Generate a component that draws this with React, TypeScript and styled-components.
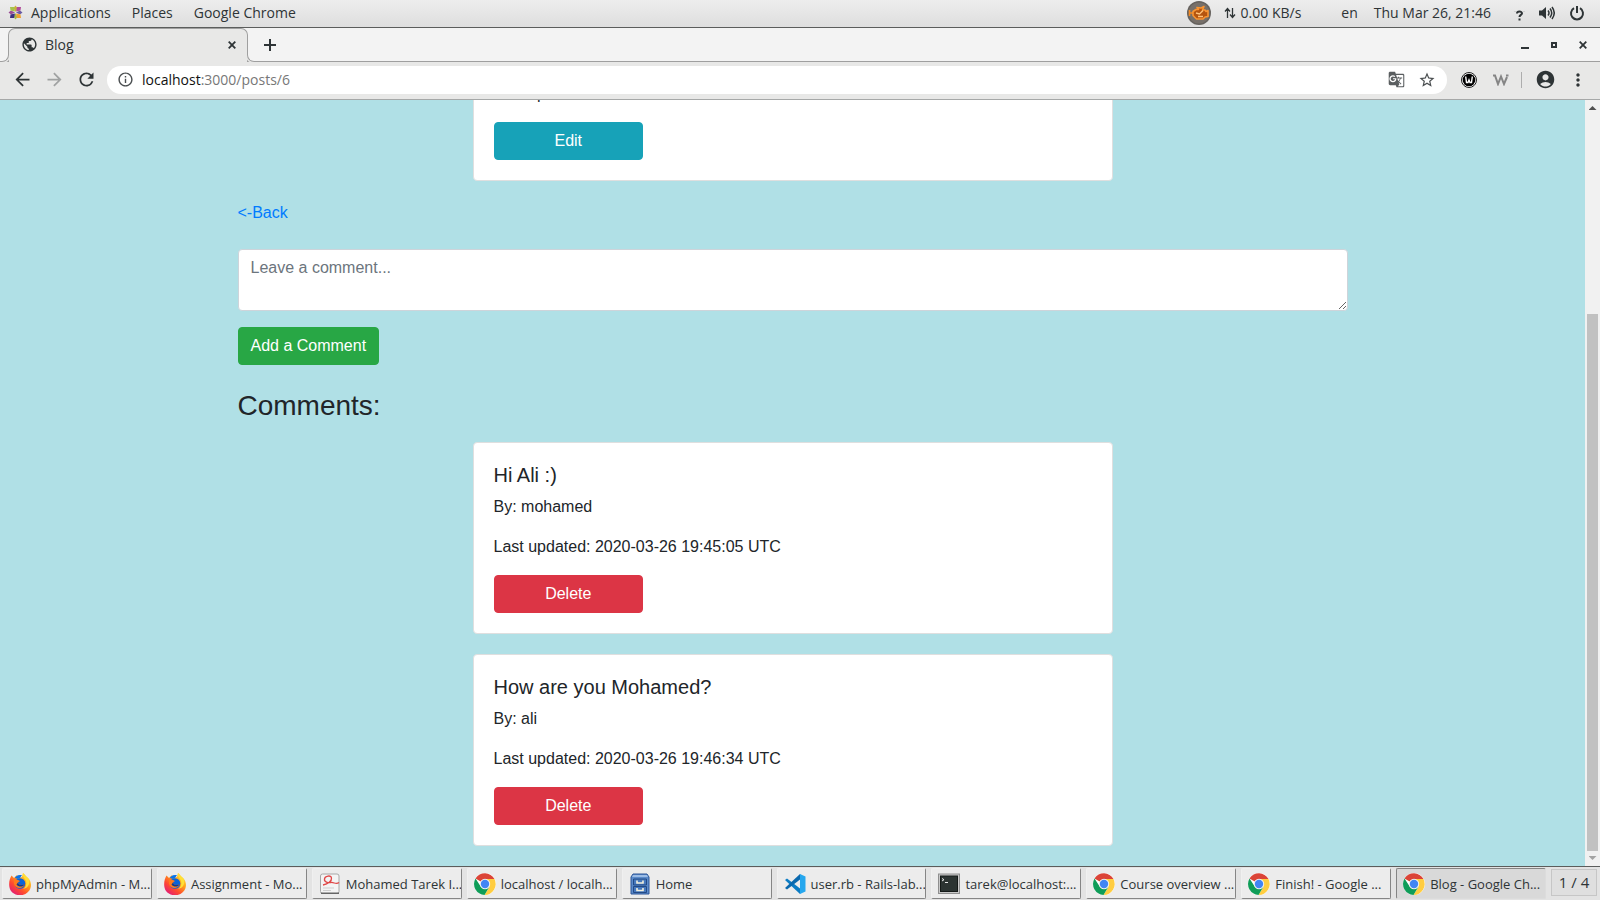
import React from "react";
import styled, { createGlobalStyle, css } from "styled-components";
import {
  MdAccountCircle,
  MdArrowBack,
  MdArrowForward,
  MdGTranslate,
  MdInfoOutline,
  MdMoreVert,
  MdPublic,
  MdRefresh,
  MdStarBorder,
} from "react-icons/md";

const ink = "#2e3436";
const chromeBg = "#e8e8e7";
const stripBg = "#f3f3f3";
const uiFont = `"Open Sans", "Noto Sans", sans-serif`;

const GlobalStyle = createGlobalStyle`
  *, *::before, *::after { box-sizing: border-box; }
  body {
    margin: 0;
    background: #b0e0e6;
    color: #212529;
    font-family: "Liberation Sans", Arial, sans-serif;
    font-size: 16px;
    line-height: 24px;
  }
  button, textarea, input { font: inherit; }
  svg { display: block; flex: none; }
`;

const Desktop = styled.div`
  height: 100vh;
  display: flex;
  flex-direction: column;
  overflow: hidden;
`;

/* ---------- top panel ---------- */

const TopPanel = styled.header`
  flex: none;
  height: 28px;
  display: flex;
  align-items: center;
  justify-content: space-between;
  padding: 0 15px 2px 8px;
  background: linear-gradient(#ededed, #dedede);
  border-bottom: 1px solid #5b5d5c;
  font-family: ${uiFont};
  font-size: 14px;
  line-height: 24px;
  color: ${ink};
`;

const PanelGroup = styled.div<{ $gap: number }>`
  display: flex;
  align-items: center;
  gap: ${(p) => p.$gap}px;
  white-space: nowrap;
`;

const PanelButton = styled.button`
  display: flex;
  align-items: center;
  gap: 8px;
  padding: 0;
  border: 0;
  background: none;
  color: inherit;
  line-height: 24px;
`;

/* ---------- browser chrome ---------- */

const TabStrip = styled.div`
  flex: none;
  height: 34px;
  display: flex;
  align-items: flex-end;
  justify-content: space-between;
  padding: 0 12px 0 8px;
  background: ${stripBg};
  border-bottom: 1px solid #9f9f9f;
`;

const Tabs = styled.div`
  display: flex;
  align-items: center;
  gap: 14px;
  align-self: stretch;
`;

const foot = css`
  content: "";
  position: absolute;
  bottom: 0;
  width: 8px;
  height: 8px;
  background: ${stripBg};
  border-bottom: 1px solid #9f9f9f;
`;

const Tab = styled.div`
  position: relative;
  width: 240px;
  height: 34px;
  margin-bottom: -1px;
  display: flex;
  align-items: center;
  padding: 0 10px 2px 12px;
  background: ${chromeBg};
  border: solid #9f9f9f;
  border-width: 1px 1px 0;
  border-radius: 7px 7px 0 0;
  font-family: ${uiFont};
  font-size: 14px;
  line-height: 20px;
  color: ${ink};

  &::before {
    ${foot}
    left: -8px;
    border-right: 1px solid #9f9f9f;
    border-bottom-right-radius: 7px;
    box-shadow: 1px 1px 0 ${chromeBg};
  }
  &::after {
    ${foot}
    right: -8px;
    border-left: 1px solid #9f9f9f;
    border-bottom-left-radius: 7px;
    box-shadow: -1px 1px 0 ${chromeBg};
  }
`;

const TabTitle = styled.span`
  flex: 1;
  margin-left: 7px;
`;

const IconButton = styled.button<{ $size?: number; $tone?: string }>`
  flex: none;
  width: ${(p) => p.$size ?? 16}px;
  height: ${(p) => p.$size ?? 16}px;
  display: grid;
  place-items: center;
  padding: 0;
  border: 0;
  background: none;
  color: ${(p) => p.$tone ?? ink};
`;

const WindowControls = styled.div`
  display: flex;
  align-items: center;
  gap: 13px;
  align-self: stretch;
  margin-right: -3px;
`;

const Toolbar = styled.div`
  flex: none;
  position: relative;
  height: 38px;
  display: flex;
  align-items: center;
  gap: 10px;
  padding: 0 12px 2px 11px;
  background: ${chromeBg};
  border-bottom: 1px solid #a6a8a8;
`;

const Omnibox = styled.div`
  flex: 1;
  height: 28px;
  display: flex;
  align-items: center;
  padding: 0 10px;
  border-radius: 14px;
  background: #fff;
  color: #4a4e50;
`;

const Address = styled.div`
  flex: 1;
  margin-left: 8px;
  font-family: ${uiFont};
  font-size: 14px;
  line-height: 20px;
  color: #777;
`;

const Host = styled.span`
  color: #111;
`;

const OmniActions = styled.div`
  display: flex;
  align-items: center;
  gap: 12px;
`;

const Extensions = styled.div`
  display: flex;
  align-items: center;
  gap: 12px;
`;

const Divider = styled.span`
  width: 1px;
  height: 16px;
  background: #adadad;
`;

/* ---------- page ---------- */

const Viewport = styled.div`
  flex: 1;
  min-height: 0;
  display: flex;
  background: #b0e0e6;
`;

const PageScroll = styled.main`
  flex: 1;
  min-width: 0;
  display: flex;
  flex-direction: column;
  justify-content: flex-end;
  overflow: hidden;
`;

const Container = styled.div`
  width: 100%;
  max-width: 1140px;
  margin: 0 auto;
  padding: 0 15px;
`;

const Card = styled.article`
  max-width: 640px;
  margin: 0 auto 20px;
  padding: 20px;
  border: 1px solid #dfdfdf;
  border-radius: 4px;
  background: #fff;
`;

const CardTitle = styled.h5`
  margin: 0 0 8px;
  font-size: 20px;
  line-height: 24px;
  font-weight: 400;
`;

const CardText = styled.p`
  margin: 0 0 16px;
`;

const tones = { info: "#17a2b8", danger: "#dc3545", success: "#28a745" };

const Button = styled.button<{ $tone: keyof typeof tones; $quarter?: boolean }>`
  display: block;
  width: ${(p) => (p.$quarter ? "25%" : "auto")};
  height: 38px;
  padding: 0 12px;
  border: 1px solid ${(p) => tones[p.$tone]};
  border-radius: 4px;
  background: ${(p) => tones[p.$tone]};
  color: #fff;
  line-height: 24px;
`;

const BackLink = styled.a`
  display: block;
  width: max-content;
  margin-bottom: 24px;
  color: #007bff;
  text-decoration: none;
`;

const CommentForm = styled.form`
  display: flex;
  flex-direction: column;
  align-items: flex-start;
  gap: 16px;
  margin-bottom: 24px;
`;

const CommentBox = styled.textarea`
  display: block;
  width: 100%;
  height: 62px;
  padding: 6px 12px;
  border: 1px solid #ced4da;
  border-radius: 4px;
  background: #fff;
  color: #495057;
  resize: vertical;
  &::placeholder {
    color: #6c757d;
    opacity: 1;
  }
`;

const Heading = styled.h3`
  margin: 0 0 19px;
  font-size: 28px;
  line-height: 34px;
  font-weight: 400;
`;

const ScrollTrack = styled.div`
  flex: none;
  width: 15px;
  display: flex;
  flex-direction: column;
  align-items: center;
  background: #f1f1f1;
`;

const ScrollArrow = styled.span<{ $down?: boolean }>`
  width: 8px;
  height: 4px;
  margin: ${(p) => (p.$down ? "5px 0 6px" : "6px 0 5px")};
  background: ${(p) => (p.$down ? "#a3a3a3" : "#505050")};
  clip-path: ${(p) =>
    p.$down ? "polygon(0 0, 100% 0, 50% 100%)" : "polygon(50% 0, 100% 100%, 0 100%)"};
`;

const ScrollLane = styled.div`
  flex: 1;
  display: flex;
  flex-direction: column;
  justify-content: flex-end;
`;

const ScrollThumb = styled.div`
  width: 11px;
  height: 73%;
  background: #c1c1c1;
`;

/* ---------- bottom panel ---------- */

const TaskBar = styled.footer`
  flex: none;
  height: 34px;
  display: flex;
  gap: 5px;
  padding: 1px 3px 1px 2px;
  background: #e3e3e3;
  border-top: 1px solid #5b5d5c;
  font-family: ${uiFont};
  font-size: 13px;
  color: ${ink};
`;

const TaskButton = styled.button<{ $active?: boolean }>`
  flex: 1;
  min-width: 0;
  display: flex;
  align-items: center;
  gap: 5px;
  padding: 0 0 0 6px;
  overflow: hidden;
  white-space: nowrap;
  color: inherit;
  border: solid;
  border-width: 1px;
  border-color: ${(p) =>
    p.$active ? "#858585 #dcdcdc #dcdcdc #858585" : "#f0f0f0 #858585 #858585 #f0f0f0"};
  border-radius: 2px;
  background: ${(p) => (p.$active ? "#d9d9d9" : "#ececec")};
`;

const Pager = styled.button`
  flex: none;
  width: 46px;
  margin: 1px 0 3px;
  padding: 0 0 2px;
  border: 1px solid #c6c6c6;
  background: #dfdfdf;
  color: inherit;
  font-size: 15px;
`;

/* ---------- drawings ---------- */

const CentosLogo = () => (
  <svg width="15" height="15" viewBox="0 0 30 30">
    <path d="M15 1 19 6 15 14 11 6Z" fill="#c9b23a" />
    <path d="M15 29 19 24 15 16 11 24Z" fill="#a4b64d" />
    <path d="M1 15 6 11 14 15 6 19Z" fill="#9b4d96" />
    <path d="M29 15 24 11 16 15 24 19Z" fill="#6a5ca3" />
    <path d="M4 4h8l2 9-9-2z" fill="#a6c34c" />
    <path d="M26 4h-8l-2 9 9-2z" fill="#b04c9a" />
    <path d="M4 26h8l2-9-9 2z" fill="#3c2f80" />
    <path d="M26 26h-8l-2-9 9 2z" fill="#efa032" />
  </svg>
);

const EngineIcon = () => (
  <svg width="24" height="24" viewBox="0 0 24 24">
    <circle cx="12" cy="12" r="12" fill="#66625e" />
    <circle cx="12" cy="12" r="10.500" fill="#77706a" />
    <path d="M2.500 9v6M3 12h3" fill="none" stroke="#f58a23" strokeWidth="1.600" />
    <path
      d="M6 10.500 9 8.500h2.500L10 6.500l4 .5 3-1.500L15.500 9H18l1 1.500 2-1v6l-3 .5-2 2H9.500L6 14.500Z"
      fill="#b4540f"
      stroke="#f99432"
      strokeWidth="1.600"
      strokeLinejoin="round"
    />
    <path d="m9 12 3.500 1L16 9.500M11 15.500h5" fill="none" stroke="#ffc27a" strokeWidth="1.400" />
  </svg>
);

const SpeedIcon = () => (
  <svg width="12" height="12" viewBox="0 0 12 12" fill="none" stroke={ink} strokeWidth="1.300">
    <path d="M3.500 11V2M1 4.500 3.500 1.500 6 4.500M8.500 1v9M6 7.500l2.500 3 2.500-3" />
  </svg>
);

const HelpIcon = () => (
  <svg width="11" height="16" viewBox="0 0 11 16" fill="none" stroke={ink} strokeWidth="2">
    <path d="M3 8.500C3 6 8 6 8 8.300 8 10 5.500 9.700 5.500 12M5.500 13.500v2" />
    <path d="M.5 6.500h1M9.500 6.500h1" stroke="#bbb" strokeWidth="1" />
  </svg>
);

const SpeakerIcon = () => (
  <svg width="16" height="14" viewBox="0 0 16 14">
    <path d="M0 4.500h3L7 1v12L3 9.500H0z" fill={ink} />
    <path
      d="M9 4.500q2 2.500 0 5M11 2.500q3.500 4.500 0 9M13 1q4.500 6 0 12"
      fill="none"
      stroke={ink}
      strokeWidth="1.500"
    />
  </svg>
);

const PowerIcon = () => (
  <svg width="16" height="16" viewBox="0 0 16 16" fill="none" stroke={ink} strokeWidth="2">
    <path d="M5 3.200a6 6 0 1 0 6 0M8 1v7" />
  </svg>
);

const CrossIcon = ({ size = 8 }: { size?: number }) => (
  <svg width={size} height={size} viewBox="0 0 8 8" stroke={ink} strokeWidth="1.800">
    <path d="m.7.7 6.600 6.600M7.300.7.7 7.300" />
  </svg>
);

const PlusIcon = () => (
  <svg width="12" height="12" viewBox="0 0 12 12" stroke={ink} strokeWidth="2">
    <path d="M6 0v12M0 6h12" />
  </svg>
);

const MinimizeIcon = () => (
  <svg width="8" height="8" viewBox="0 0 8 8">
    <path d="M0 6h8v2H0z" fill={ink} />
  </svg>
);

const MaximizeIcon = () => (
  <svg width="6" height="6" viewBox="0 0 6 6">
    <path d="M1 1h4v4H1z" fill="none" stroke={ink} strokeWidth="2" />
  </svg>
);

const WapIcon = () => (
  <svg width="16" height="16" viewBox="0 0 16 16">
    <circle cx="8" cy="8" r="7.500" fill="#fff" stroke="#222" />
    <circle cx="8" cy="8" r="6.300" fill="#000" />
    <path
      d="M4.700 4.500 5.500 10.500H7L8 8l1 2.500h1.500l.8-6"
      fill="none"
      stroke="#fff"
      strokeWidth="1.400"
    />
  </svg>
);

const WaveIcon = () => (
  <svg width="16" height="12" viewBox="0 0 16 12" fill="none" stroke="#858585" strokeWidth="2">
    <path d="M0 1.500h2L5 10l3-7.500L11 10l3-7" />
    <path d="M13 1.500h2.500" />
  </svg>
);

const FirefoxIcon = () => (
  <svg width="22" height="22" viewBox="0 0 22 22">
    <defs>
      <linearGradient id="fox" x1="1" y1="0" x2="0.200" y2="1">
        <stop offset="0" stopColor="#fff44f" />
        <stop offset="0.400" stopColor="#ffa31a" />
        <stop offset="0.700" stopColor="#ff4a2f" />
        <stop offset="1" stopColor="#e0197d" />
      </linearGradient>
    </defs>
    <path
      d="M2.500 2.500 5 5l3-3 1 3 4-1 1-4c3 2 3 4 5 5 4 4 4 10 0 14-5 5-13 4-17-1C-1 13 0 7 2.500 2.500Z"
      fill="url(#fox)"
    />
    <circle cx="11" cy="10.500" r="5.300" fill="#0a63d8" />
    <path d="M11 2c-3 0-5 2-5 3l3 1 2-1 2-3z" fill="#0a73e8" />
    <path d="M5 7c2-1 3 0 4 0l2 1-2 1.500c0 2.500 4 3 6.500 2C14.500 16 6.500 16.500 5 11z" fill="#ff7a1c" />
    <path d="M9 9.500c0 2.500 4 3 6.500 2-1 2.500-6 3-8 0z" fill="#123a8c" />
    <path d="M14 0c-1 4 2 5 3 8 1 4-1 7-3 8 7-1 8-9 4-12-2-1-3-3-4-4Z" fill="#ffdf35" />
  </svg>
);

const ChromeIcon = () => (
  <svg width="22" height="22" viewBox="0 0 22 22">
    <circle cx="11" cy="11" r="11" fill="#fff" />
    <path d="M11 11 1.500 5.500A11 11 0 0 1 20.500 6H11Z" fill="#db4437" />
    <path d="M11 11 11 6H20.500A11 11 0 0 1 10.500 22l5-8Z" fill="#ffcd40" />
    <path d="M6.700 13.500 1.500 5.500A11 11 0 0 0 10.500 22l4.800-8Z" fill="#0f9d58" />
    <circle cx="11" cy="11" r="5.200" fill="#f1f1f1" />
    <circle cx="11" cy="11" r="4.200" fill="#4285f4" />
  </svg>
);

const DocumentIcon = () => (
  <svg width="22" height="22" viewBox="0 0 22 22">
    <rect x="1.500" y="1" width="18.500" height="19.500" rx="2" fill="#f4f4f4" stroke="#a8a8a8" />
    <path d="M2 20.300h18" stroke="#666" strokeWidth="1.500" />
    <path
      d="M4 12c5-1 9-4 8.500-7C12 2 6 2.500 5.500 6 5 9 9 10 12 9.500s5 2.500 8 0"
      fill="none"
      stroke="#e04848"
      strokeWidth="1.300"
    />
    <path d="M4 15h11M4 17.500h8" stroke="#cfcfcf" />
  </svg>
);

const CabinetIcon = () => (
  <svg width="22" height="22" viewBox="0 0 22 22">
    <path d="M4 1h14l2 3v17H2V4z" fill="#5b8bcb" stroke="#2c5596" />
    <path d="M4 2h14l1 2H3z" fill="#9bbce6" />
    <path d="M4.500 6h13v6h-13zM4.500 13.500h13v6h-13z" fill="#4678bd" stroke="#234a86" />
    <path d="M8 7.500v2.500h6V7.500M8 15v2.500h6V15" fill="none" stroke="#f3efdc" strokeWidth="1.600" />
  </svg>
);

const CodeIcon = () => (
  <svg width="22" height="22" viewBox="0 0 22 22">
    <path d="m1 7 2-1.500L18 17l-2 4z" fill="#0b7cc4" />
    <path d="m1 15 2 1.500L18 5l-2-4z" fill="#0a69ae" />
    <path d="m16 1 5.500 2.500v15L16 21z" fill="#26a7ee" />
  </svg>
);

const TerminalIcon = () => (
  <svg width="22" height="22" viewBox="0 0 22 22">
    <rect x="0.500" y="1" width="21" height="19.500" fill="#c9c9c9" stroke="#8f8f8f" />
    <rect x="2.500" y="3" width="17" height="15.500" fill="#2c3432" stroke="#151a18" />
    <path d="m4 5.500 2 1.200L4 8M7 9.500h3" fill="none" stroke="#e8e8e8" />
  </svg>
);

/* ---------- data ---------- */

const comments = [
  { title: "Hi Ali :)", author: "mohamed", updated: "2020-03-26 19:45:05 UTC" },
  { title: "How are you Mohamed?", author: "ali", updated: "2020-03-26 19:46:34 UTC" },
];

const tasks = [
  { icon: FirefoxIcon, label: "phpMyAdmin - M..." },
  { icon: FirefoxIcon, label: "Assignment - Mo..." },
  { icon: DocumentIcon, label: "Mohamed Tarek I..." },
  { icon: ChromeIcon, label: "localhost / localh..." },
  { icon: CabinetIcon, label: "Home" },
  { icon: CodeIcon, label: "user.rb - Rails-lab..." },
  { icon: TerminalIcon, label: "tarek@localhost:..." },
  { icon: ChromeIcon, label: "Course overview ..." },
  { icon: ChromeIcon, label: "Finish! - Google ..." },
  { icon: ChromeIcon, label: "Blog - Google Ch...", active: true },
];

export default function App() {
  return (
    <Desktop>
      <GlobalStyle />
      <TopPanel>
        <PanelGroup $gap={21}>
          <PanelButton>
            <CentosLogo />
            Applications
          </PanelButton>
          <PanelButton>Places</PanelButton>
          <PanelButton>Google Chrome</PanelButton>
        </PanelGroup>
        <PanelGroup $gap={23}>
          <PanelGroup $gap={40}>
            <PanelGroup $gap={13}>
              <EngineIcon />
              <PanelGroup $gap={5}>
                <SpeedIcon />
                <span>0.00 KB/s</span>
              </PanelGroup>
            </PanelGroup>
            <PanelGroup $gap={16}>
              <PanelButton>en</PanelButton>
              <PanelButton>Thu Mar 26, 21:46</PanelButton>
            </PanelGroup>
          </PanelGroup>
          <PanelGroup $gap={14}>
            <HelpIcon />
            <SpeakerIcon />
            <PowerIcon />
          </PanelGroup>
        </PanelGroup>
      </TopPanel>

      <TabStrip>
        <Tabs>
          <Tab>
            <MdPublic size={17} />
            <TabTitle>Blog</TabTitle>
            <IconButton $size={10} aria-label="Close tab">
              <CrossIcon />
            </IconButton>
          </Tab>
          <IconButton aria-label="New tab">
            <PlusIcon />
          </IconButton>
        </Tabs>
        <WindowControls>
          <IconButton aria-label="Minimize">
            <MinimizeIcon />
          </IconButton>
          <IconButton aria-label="Maximize">
            <MaximizeIcon />
          </IconButton>
          <IconButton aria-label="Close window">
            <CrossIcon />
          </IconButton>
        </WindowControls>
      </TabStrip>

      <Toolbar>
        <IconButton $size={22} aria-label="Back">
          <MdArrowBack size={21} />
        </IconButton>
        <IconButton $size={22} $tone="#a0a2a2" aria-label="Forward">
          <MdArrowForward size={21} />
        </IconButton>
        <IconButton $size={22} aria-label="Reload">
          <MdRefresh size={21} />
        </IconButton>
        <Omnibox>
          <MdInfoOutline size={17} />
          <Address>
            <Host>localhost</Host>:3000/posts/6
          </Address>
          <OmniActions>
            <IconButton $size={18} $tone="#5a5e60" aria-label="Translate">
              <MdGTranslate size={17} />
            </IconButton>
            <IconButton $size={20} $tone="#4a4e50" aria-label="Bookmark">
              <MdStarBorder size={18} />
            </IconButton>
          </OmniActions>
        </Omnibox>
        <Extensions>
          <IconButton $size={24} aria-label="Extension">
            <WapIcon />
          </IconButton>
          <IconButton $size={16} aria-label="Extension">
            <WaveIcon />
          </IconButton>
          <Divider />
          <IconButton $size={22} aria-label="Profile">
            <MdAccountCircle size={21} />
          </IconButton>
          <IconButton $size={20} aria-label="Menu">
            <MdMoreVert size={20} />
          </IconButton>
        </Extensions>
      </Toolbar>

      <Viewport>
        <PageScroll>
          <Container>
            <Card>
              <CardText>Last updated:</CardText>
              <Button $tone="info" $quarter>
                Edit
              </Button>
            </Card>
            <BackLink href="#posts">&lt;-Back</BackLink>
            <CommentForm onSubmit={(e) => e.preventDefault()}>
              <CommentBox rows={2} placeholder="Leave a comment..." aria-label="Comment" />
              <Button $tone="success">Add a Comment</Button>
            </CommentForm>
            <Heading>Comments:</Heading>
            {comments.map((c) => (
              <Card key={c.title}>
                <CardTitle>{c.title}</CardTitle>
                <CardText>By: {c.author}</CardText>
                <CardText>Last updated: {c.updated}</CardText>
                <Button $tone="danger" $quarter>
                  Delete
                </Button>
              </Card>
            ))}
          </Container>
        </PageScroll>
        <ScrollTrack>
          <ScrollArrow />
          <ScrollLane>
            <ScrollThumb />
          </ScrollLane>
          <ScrollArrow $down />
        </ScrollTrack>
      </Viewport>

      <TaskBar>
        {tasks.map(({ icon: Icon, label, active }) => (
          <TaskButton key={label} $active={active}>
            <Icon />
            {label}
          </TaskButton>
        ))}
        <Pager>1 / 4</Pager>
      </TaskBar>
    </Desktop>
  );
}
